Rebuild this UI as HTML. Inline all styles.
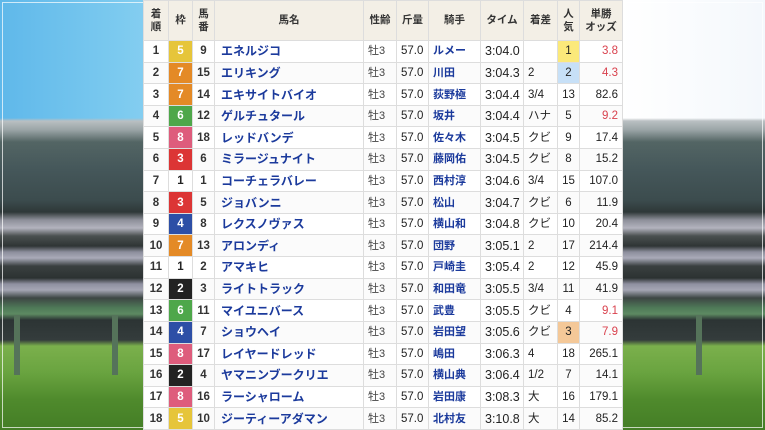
<!DOCTYPE html>
<html><head><meta charset="utf-8">
<style>
html,body{margin:0;padding:0;width:765px;height:430px;overflow:hidden;}
body{position:relative;font-family:"Liberation Sans","Noto Sans CJK JP",sans-serif;
background:
linear-gradient(180deg,rgba(0,0,0,0) 0,rgba(0,0,0,0) 118px,#b9bfc2 121px,#9aa4a6 130px,#536564 142px,#45575a 170px,#3c4c4e 200px,#2e3838 212px,#8d8f99 220px,#b3b3be 228px,#4a5050 236px,#2f3535 246px,#8c8e9c 252px,#a9aab8 258px,#3a4040 266px,#2c3232 278px,#8f90a0 284px,#a5a6b4 290px,#3d4644 298px,#4f7a58 308px,#5d8a62 314px,#2c3434 320px,#343c3c 340px,#7bb04c 346px,#6aa440 372px,#4f8a2c 400px,#447e26 430px),
linear-gradient(90deg,#5fb8ea 0,#7ccaef 120px,#a8dcf3 250px,#e8f4fb 480px,#ffffff 620px,#f4f8fc 765px);
}
.frame{position:absolute;left:2px;top:2px;right:2px;bottom:2px;border:1px solid rgba(255,255,255,.7);}
.post{position:absolute;width:6px;top:315px;height:60px;background:#55735a;}
table{position:absolute;left:143px;top:0;width:479px;height:430px;border-collapse:collapse;table-layout:fixed;background:#fff;font-size:11.5px;color:#222;}
td,th{border:1px solid #ddd;padding:0 4px;white-space:nowrap;overflow:hidden;vertical-align:middle;line-height:14px;}
th{background:#f3efe6;font-weight:bold;font-size:10.5px;color:#333;height:39px;line-height:13px;text-align:center;}
tbody tr{height:21.6px;}
tbody tr:nth-child(even) td{background:#fbfbfb;}
td.c{text-align:center;}
td.b{font-weight:bold;color:#333;}
td.r{text-align:right;}
td.n{color:#1b3a9c;font-weight:bold;font-size:12px;padding-left:6px;}
td.j{color:#1b3a9c;font-weight:bold;font-size:11px;}
td.s{font-size:11px;color:#444;}
td.t{font-size:12.5px;}
td.red{color:#d9414d;}
td.w{text-align:center;font-weight:bold;color:#fff;}
.w1{background:#fff!important;color:#222!important;}
.w2{background:#222!important;}
.w3{background:#dc3535!important;}
.w4{background:#2d4fa6!important;}
.w5{background:#e6c53a!important;}
.w6{background:#4ea74a!important;}
.w7{background:#e48a26!important;}
.w8{background:#de5c7c!important;}
.p1{background:#fbe97a!important;}
.p2{background:#c7e0f7!important;}
.p3{background:#f4c898!important;}
</style></head><body>
<div class="frame"></div>
<div class="post" style="left:14px"></div>
<div class="post" style="left:112px"></div>
<div class="post" style="left:696px"></div>
<table>
<colgroup><col style="width:25px"><col style="width:24px"><col style="width:22px"><col style="width:149px"><col style="width:33px"><col style="width:32px"><col style="width:52px"><col style="width:43px"><col style="width:34px"><col style="width:22px"><col style="width:43px"></colgroup>
<thead><tr><th>着<br>順</th><th>枠</th><th>馬<br>番</th><th>馬名</th><th>性齢</th><th>斤量</th><th>騎手</th><th>タイム</th><th>着差</th><th>人<br>気</th><th>単勝<br>オッズ</th></tr></thead>
<tbody>
<tr><td class="c b">1</td><td class="w w5">5</td><td class="c b">9</td><td class="n">エネルジコ</td><td class="s">牡3</td><td>57.0</td><td class="j">ルメー</td><td class="t">3:04.0</td><td></td><td class="c p1">1</td><td class="r red">3.8</td></tr>
<tr><td class="c b">2</td><td class="w w7">7</td><td class="c b">15</td><td class="n">エリキング</td><td class="s">牡3</td><td>57.0</td><td class="j">川田</td><td class="t">3:04.3</td><td>2</td><td class="c p2">2</td><td class="r red">4.3</td></tr>
<tr><td class="c b">3</td><td class="w w7">7</td><td class="c b">14</td><td class="n">エキサイトバイオ</td><td class="s">牡3</td><td>57.0</td><td class="j">荻野極</td><td class="t">3:04.4</td><td>3/4</td><td class="c">13</td><td class="r">82.6</td></tr>
<tr><td class="c b">4</td><td class="w w6">6</td><td class="c b">12</td><td class="n">ゲルチュタール</td><td class="s">牡3</td><td>57.0</td><td class="j">坂井</td><td class="t">3:04.4</td><td>ハナ</td><td class="c">5</td><td class="r red">9.2</td></tr>
<tr><td class="c b">5</td><td class="w w8">8</td><td class="c b">18</td><td class="n">レッドバンデ</td><td class="s">牡3</td><td>57.0</td><td class="j">佐々木</td><td class="t">3:04.5</td><td>クビ</td><td class="c">9</td><td class="r">17.4</td></tr>
<tr><td class="c b">6</td><td class="w w3">3</td><td class="c b">6</td><td class="n">ミラージュナイト</td><td class="s">牡3</td><td>57.0</td><td class="j">藤岡佑</td><td class="t">3:04.5</td><td>クビ</td><td class="c">8</td><td class="r">15.2</td></tr>
<tr><td class="c b">7</td><td class="w w1">1</td><td class="c b">1</td><td class="n">コーチェラバレー</td><td class="s">牡3</td><td>57.0</td><td class="j">西村淳</td><td class="t">3:04.6</td><td>3/4</td><td class="c">15</td><td class="r">107.0</td></tr>
<tr><td class="c b">8</td><td class="w w3">3</td><td class="c b">5</td><td class="n">ジョバンニ</td><td class="s">牡3</td><td>57.0</td><td class="j">松山</td><td class="t">3:04.7</td><td>クビ</td><td class="c">6</td><td class="r">11.9</td></tr>
<tr><td class="c b">9</td><td class="w w4">4</td><td class="c b">8</td><td class="n">レクスノヴァス</td><td class="s">牡3</td><td>57.0</td><td class="j">横山和</td><td class="t">3:04.8</td><td>クビ</td><td class="c">10</td><td class="r">20.4</td></tr>
<tr><td class="c b">10</td><td class="w w7">7</td><td class="c b">13</td><td class="n">アロンディ</td><td class="s">牡3</td><td>57.0</td><td class="j">団野</td><td class="t">3:05.1</td><td>2</td><td class="c">17</td><td class="r">214.4</td></tr>
<tr><td class="c b">11</td><td class="w w1">1</td><td class="c b">2</td><td class="n">アマキヒ</td><td class="s">牡3</td><td>57.0</td><td class="j">戸崎圭</td><td class="t">3:05.4</td><td>2</td><td class="c">12</td><td class="r">45.9</td></tr>
<tr><td class="c b">12</td><td class="w w2">2</td><td class="c b">3</td><td class="n">ライトトラック</td><td class="s">牡3</td><td>57.0</td><td class="j">和田竜</td><td class="t">3:05.5</td><td>3/4</td><td class="c">11</td><td class="r">41.9</td></tr>
<tr><td class="c b">13</td><td class="w w6">6</td><td class="c b">11</td><td class="n">マイユニバース</td><td class="s">牡3</td><td>57.0</td><td class="j">武豊</td><td class="t">3:05.5</td><td>クビ</td><td class="c">4</td><td class="r red">9.1</td></tr>
<tr><td class="c b">14</td><td class="w w4">4</td><td class="c b">7</td><td class="n">ショウヘイ</td><td class="s">牡3</td><td>57.0</td><td class="j">岩田望</td><td class="t">3:05.6</td><td>クビ</td><td class="c p3">3</td><td class="r red">7.9</td></tr>
<tr><td class="c b">15</td><td class="w w8">8</td><td class="c b">17</td><td class="n">レイヤードレッド</td><td class="s">牡3</td><td>57.0</td><td class="j">嶋田</td><td class="t">3:06.3</td><td>4</td><td class="c">18</td><td class="r">265.1</td></tr>
<tr><td class="c b">16</td><td class="w w2">2</td><td class="c b">4</td><td class="n">ヤマニンブークリエ</td><td class="s">牡3</td><td>57.0</td><td class="j">横山典</td><td class="t">3:06.4</td><td>1/2</td><td class="c">7</td><td class="r">14.1</td></tr>
<tr><td class="c b">17</td><td class="w w8">8</td><td class="c b">16</td><td class="n">ラーシャローム</td><td class="s">牡3</td><td>57.0</td><td class="j">岩田康</td><td class="t">3:08.3</td><td>大</td><td class="c">16</td><td class="r">179.1</td></tr>
<tr><td class="c b">18</td><td class="w w5">5</td><td class="c b">10</td><td class="n">ジーティーアダマン</td><td class="s">牡3</td><td>57.0</td><td class="j">北村友</td><td class="t">3:10.8</td><td>大</td><td class="c">14</td><td class="r">85.2</td></tr>
</tbody></table>
</body></html>
